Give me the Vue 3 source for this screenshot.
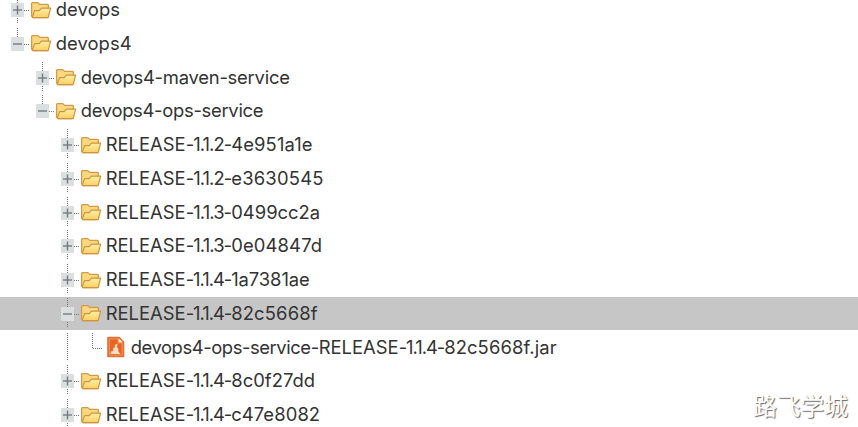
<script setup>
import { ref, onMounted } from 'vue'

const release = (version, hash, end, extra = {}) => ({
  level: 2,
  sign: '+',
  parts: [['RELEASE', 80], [`-${version}-`, 45.5], [hash, end - 231.5]],
  ...extra,
})

const rows = [
  { level: 0, sign: '+', parts: [['devops', 64.5]] },
  { level: 0, sign: '-', last: true, parts: [['devops4', 76]] },
  { level: 1, sign: '+', parts: [['devops4-maven-service', 209]] },
  { level: 1, sign: '-', last: true, parts: [['devops4-ops-service', 182.5]] },
  release('1.1.2', '4e951a1e', 313),
  release('1.1.2', 'e3630545', 324),
  release('1.1.3', '0499cc2a', 320.5),
  release('1.1.3', '0e04847d', 322.5),
  release('1.1.4', '1a7381ae', 310),
  release('1.1.4', '82c5668f', 318, { sign: '-', selected: true }),
  {
    level: 3,
    file: true,
    parts: [['devops4-ops-service-', 188], ['RELEASE', 80], ['-1.1.4-', 45.5], ['82c5668f.jar', 112.5]],
  },
  release('1.1.4', '8c0f27dd', 315.5),
  release('1.1.4', 'c47e8082', 320.5),
]

const tree = ref(null)

// Tracks each label part so that it fills its column width.
onMounted(() => {
  tree.value.querySelectorAll('.part').forEach((el) => {
    const inner = el.firstElementChild
    const width = parseFloat(el.style.width)
    const natural = inner.getBoundingClientRect().width
    inner.style.letterSpacing = `${(width - natural) / inner.textContent.length}px`
  })
})
</script>

<template>
  <main ref="tree" class="tree">
    <svg class="defs" width="0" height="0">
      <defs>
        <linearGradient id="flap" x1="0" y1="0" x2="0" y2="1">
          <stop offset="0" stop-color="#fff0a8" />
          <stop offset="1" stop-color="#fbcf62" />
        </linearGradient>
      </defs>
    </svg>
    <div v-for="(row, i) in rows" :key="i" class="row" :class="{ selected: row.selected }">
      <div v-for="n in row.level" :key="n" class="indent">
        <svg v-if="row.file && n === 3" class="guide" width="25" height="33"><path d="M9.5 2V30" /></svg>
      </div>
      <div class="joint">
        <svg class="guide" width="25" height="33">
          <path v-if="row.file" d="M9.5 2V17.5H20" />
          <template v-else>
            <path :d="row.last ? 'M9.5 1V16' : 'M9.5 1V30'" />
            <path d="M16 17.5H21" />
            <rect x="3" y="10" width="13" height="14" />
            <path class="sign" d="M5 17H14" />
            <path v-if="row.sign === '+'" class="sign" d="M9.5 12.5V21.5" />
          </template>
        </svg>
      </div>
      <svg v-if="row.file" class="icon" width="25" height="22" viewBox="0 0 25 22">
        <path d="M3 1.5H14L18.5 6V20.5H3Z" fill="#ee7a3a" stroke="#e07035" stroke-width="1.6" stroke-linejoin="round" />
        <path d="M4.5 3H13V7H17V19H4.5Z" fill="#e9651f" stroke="#f6a574" stroke-width="0.6" />
        <path d="M13.7 2.3V6.3H17.7Z" fill="#fff0df" />
        <path d="M5.5 18L6 15.5L8.5 14.5L8 12L10 11.5L9.8 9L12.5 7.5L12 11.5L13.3 12.5V15.5L15.5 18Z" fill="#fbdcc6" />
      </svg>
      <svg v-else class="icon" width="25" height="22" viewBox="0 0 25 22">
        <path d="M1.6 17V4.5Q1.6 3.6 2.5 3.6H7.8L9.6 5.4H17.4Q18.4 5.4 18.4 6.4V16L17 18.6H3Z" fill="#fad880" stroke="#d39a48" stroke-width="1.3" stroke-linejoin="round" />
        <path d="M2.3 18L4.6 11.6H9.2L11.5 9.2H20.6L18.2 18.6H3Z" fill="url(#flap)" stroke="#cf9440" stroke-width="1.2" stroke-linejoin="round" />
      </svg>
      <div class="label">
        <span v-for="(part, p) in row.parts" :key="p" class="part" :style="{ width: part[1] + 'px' }"><span>{{ part[0] }}</span></span>
      </div>
    </div>
    <div class="watermark">路飞学城</div>
  </main>
</template>

<style>
body {
  margin: 0;
  background: #fff;
  overflow: hidden;
}
</style>

<style scoped>
.tree {
  position: relative;
  box-sizing: border-box;
  width: 858px;
  height: 427px;
  overflow: hidden;
  color: #333;
  font-family: Inter, "Liberation Sans", sans-serif;
  font-size: 18.4px;
}
.defs {
  position: absolute;
}
.row {
  display: flex;
  align-items: center;
  box-sizing: border-box;
  height: 33.75px;
  padding-left: 8px;
  border-bottom: 0.75px solid transparent;
  background-clip: padding-box;
}
.defs + .row {
  margin-top: -6.75px;
}
.selected {
  background-color: #c6c6c6;
}
.indent {
  flex: none;
  width: 25px;
  height: 33px;
}
.joint {
  flex: none;
  width: 22px;
  height: 33px;
}
.guide {
  display: block;
  overflow: visible;
}
.guide path {
  fill: none;
  stroke: #777;
  stroke-dasharray: 1 1;
}
.guide rect {
  fill: #dcdfe0;
}
.guide .sign {
  stroke: #747b80;
  stroke-width: 1.4;
  stroke-dasharray: none;
}
.icon {
  flex: none;
  display: block;
}
.label {
  display: flex;
  padding-left: 0.7px;
  line-height: 19px;
  white-space: nowrap;
}
.part {
  flex: none;
  display: block;
}
.watermark {
  position: absolute;
  right: 10px;
  bottom: 7px;
  color: #fff;
  font-family: "Noto Sans CJK SC", sans-serif;
  font-size: 23.7px;
  font-weight: 400;
  line-height: 30px;
  text-shadow: 1px 1px 1px #666;
}
</style>
